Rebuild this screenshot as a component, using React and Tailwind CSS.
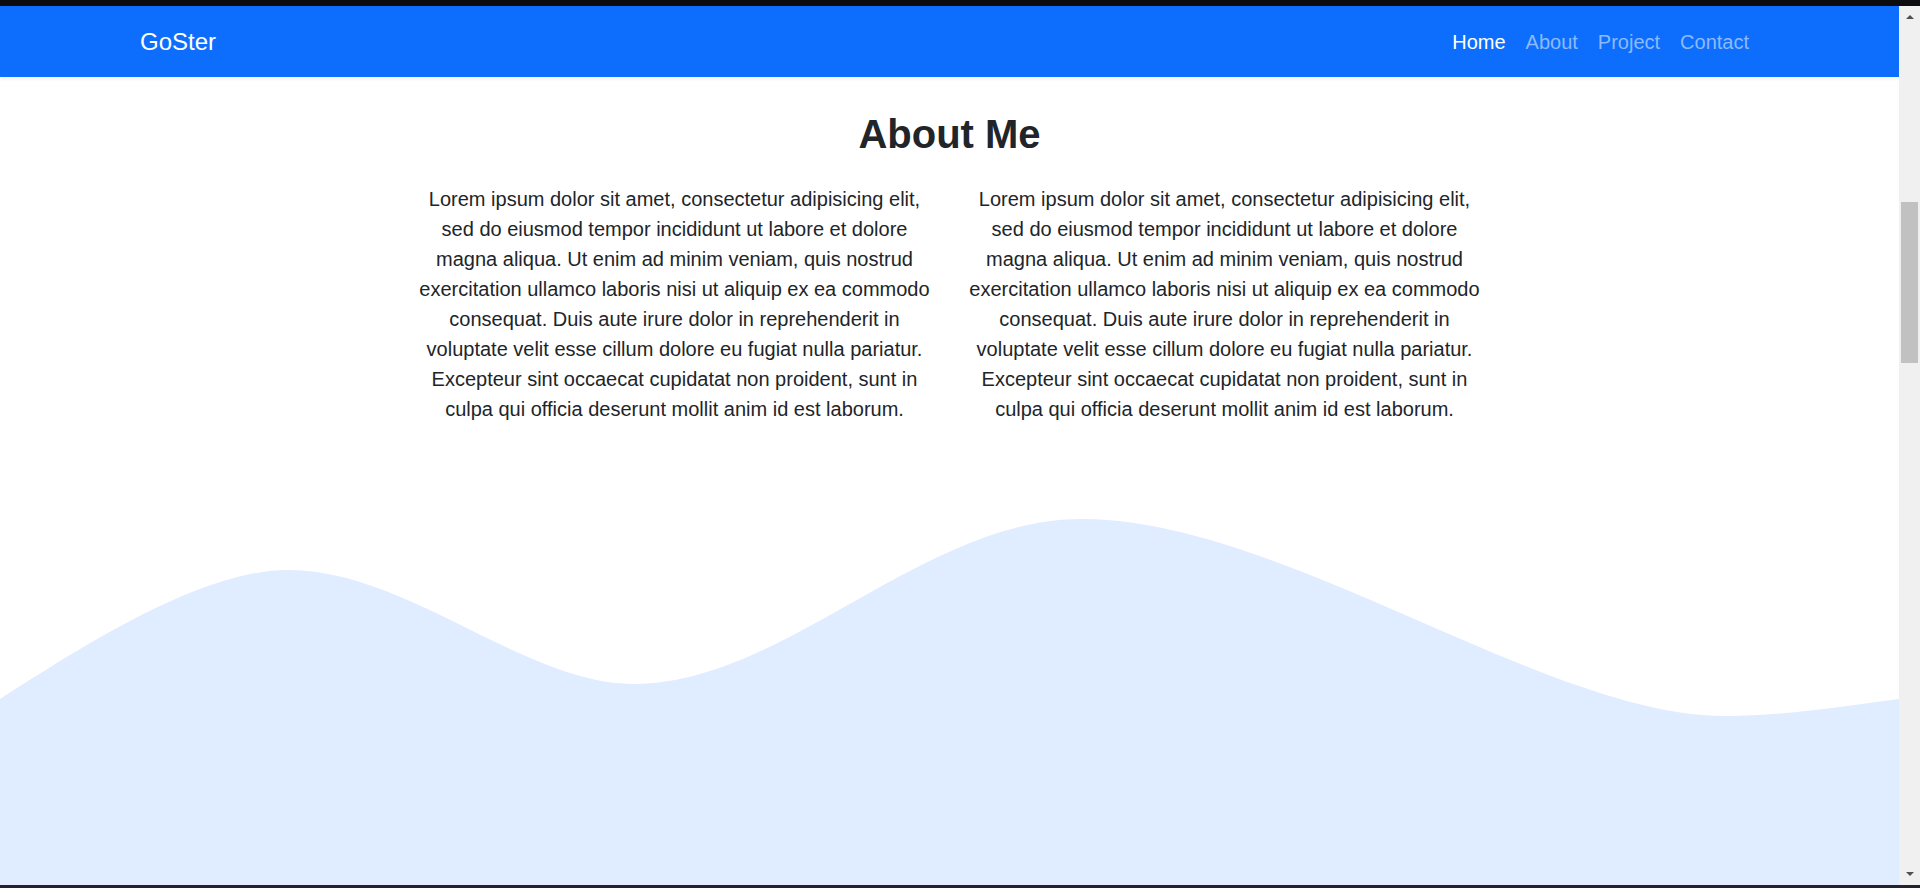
import React from 'react';

const lorem = [
  'Lorem ipsum dolor sit amet, consectetur adipisicing elit,',
  'sed do eiusmod tempor incididunt ut labore et dolore',
  'magna aliqua. Ut enim ad minim veniam, quis nostrud',
  'exercitation ullamco laboris nisi ut aliquip ex ea commodo',
  'consequat. Duis aute irure dolor in reprehenderit in',
  'voluptate velit esse cillum dolore eu fugiat nulla pariatur.',
  'Excepteur sint occaecat cupidatat non proident, sunt in',
  'culpa qui officia deserunt mollit anim id est laborum.',
];

const links = [
  { label: 'Home', active: true },
  { label: 'About' },
  { label: 'Project' },
  { label: 'Contact' },
];

const Navbar = () => (
  <nav className="h-[71px] shrink-0 bg-[#0d6efd] flex items-center justify-between px-[140px] shadow-[0_2px_4px_rgba(0,0,0,0.06)]">
    <a className="text-white text-[24px] leading-[36px]">GoSter</a>
    <ul className="flex">
      {links.map((link) => (
        <li key={link.label}>
          <a
            className={
              link.active
                ? 'block px-[10px] text-[20px] leading-[30px] text-white'
                : 'block px-[10px] text-[20px] leading-[30px] text-[#8cbafe]'
            }
          >
            {link.label}
          </a>
        </li>
      ))}
    </ul>
  </nav>
);

const Column = () => (
  <div className="px-[15px] text-center">
    <p className="text-[20px] leading-[30px] text-[#212529] whitespace-nowrap">
      {lorem.map((line, i) => (
        <React.Fragment key={i}>
          {line}
          {i < lorem.length - 1 && <br />}
        </React.Fragment>
      ))}
    </p>
  </div>
);

const Wave = () => (
  <svg className="block w-[1899px] h-[385px] shrink-0" viewBox="0 0 1899 385" preserveAspectRatio="none">
    <path
      fill="#e0ecff"
      d="M0,199 C80,148 200,70 288,70 C408,70 524,184 634,184 C784,184 922,19 1082,19 C1282,19 1545,216 1725,216 C1790,216 1849,205 1899,199 L1899,385 L0,385 Z"
    />
  </svg>
);

const Scrollbar = () => (
  <div className="w-[21px] h-full bg-[#f0f0f0] flex flex-col items-center">
    <div className="h-[22px] w-full flex items-center justify-center">
      <div className="w-0 h-0 border-l-[4px] border-r-[4px] border-b-[4px] border-l-transparent border-r-transparent border-b-[#505050]" />
    </div>
    <div className="h-[174px]" />
    <div className="w-[17px] h-[161px] bg-[#c1c1c1]" />
    <div className="flex-1" />
    <div className="h-[22px] w-full flex items-center justify-center">
      <div className="w-0 h-0 border-l-[4px] border-r-[4px] border-t-[4px] border-l-transparent border-r-transparent border-t-[#505050]" />
    </div>
  </div>
);

export default function App() {
  return (
    <div className="h-[888px] w-[1920px] flex flex-col overflow-hidden bg-[#0c0c0e] font-['Liberation_Sans',Arial,sans-serif]">
      <div className="h-[6px] shrink-0 bg-[#0c0c0e]" />
      <div className="flex h-[879px] shrink-0">
        <div className="w-[1899px] h-full flex flex-col bg-white">
          <Navbar />
          <section className="h-[423px] shrink-0 pt-[33px]">
            <h2 className="text-center text-[40px] leading-[48px] font-bold text-[#212529] mb-[26px]">About Me</h2>
            <div className="grid grid-cols-2 w-[1100px] mx-auto">
              <Column />
              <Column />
            </div>
          </section>
          <Wave />
        </div>
        <Scrollbar />
      </div>
      <div className="h-[3px] shrink-0 bg-[#23232f]" />
    </div>
  );
}
